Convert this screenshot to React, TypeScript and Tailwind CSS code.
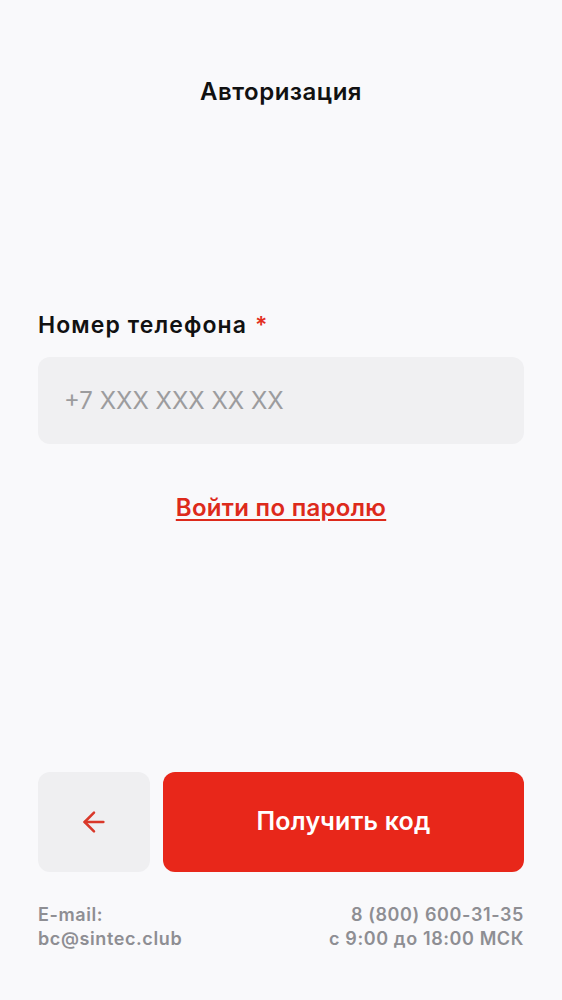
import { ArrowLeft } from "lucide-react"

export default function App() {
  return (
    <div className="h-[1000px] flex flex-col bg-[#f9f9fb] px-[38px] font-['Inter',sans-serif] text-[#111]">
      <h1 className="pt-[78px] text-center text-[24px] leading-[28px] font-semibold tracking-[0.5px]">Авторизация</h1>

      <label className="mt-[205px] text-[23px] leading-[28px] font-semibold tracking-[1.1px]">
        Номер телефона <span className="ml-[1px] text-[#e3301f]">*</span>
      </label>
      <input
        className="mt-[18px] h-[87px] w-full rounded-xl bg-[#f0f0f2] px-[26px] text-[24px] outline-none placeholder:text-[#9c9c9e]"
        placeholder="+7 XXX XXX XX XX"
      />

      <div className="mt-[50px] text-center">
        <a href="#" className="text-[24px] leading-[28px] font-semibold tracking-[0.3px] text-[#dd2a1b] underline underline-offset-[3px]">
          Войти по паролю
        </a>
      </div>

      <div className="mt-auto flex gap-[13px]">
        <button className="h-[100px] w-[112px] shrink-0 rounded-xl bg-[#efeff1] flex items-center justify-center">
          <ArrowLeft className="h-[32px] w-[32px] text-[#d9382a]" strokeWidth={1.9} />
        </button>
        <button className="h-[100px] flex-1 rounded-xl bg-[#e8271a] text-white text-[25px] font-semibold tracking-[0.2px]">
          Получить код
        </button>
      </div>

      <div className="mt-[31px] pb-[49px] flex justify-between text-[18px] leading-[24px] font-semibold tracking-[0.6px] text-[#8e8e93]">
        <div>
          <div>E-mail:</div>
          <div>bc@sintec.club</div>
        </div>
        <div className="text-right">
          <div>8 (800) 600-31-35</div>
          <div>с 9:00 до 18:00 МСК</div>
        </div>
      </div>
    </div>
  )
}
